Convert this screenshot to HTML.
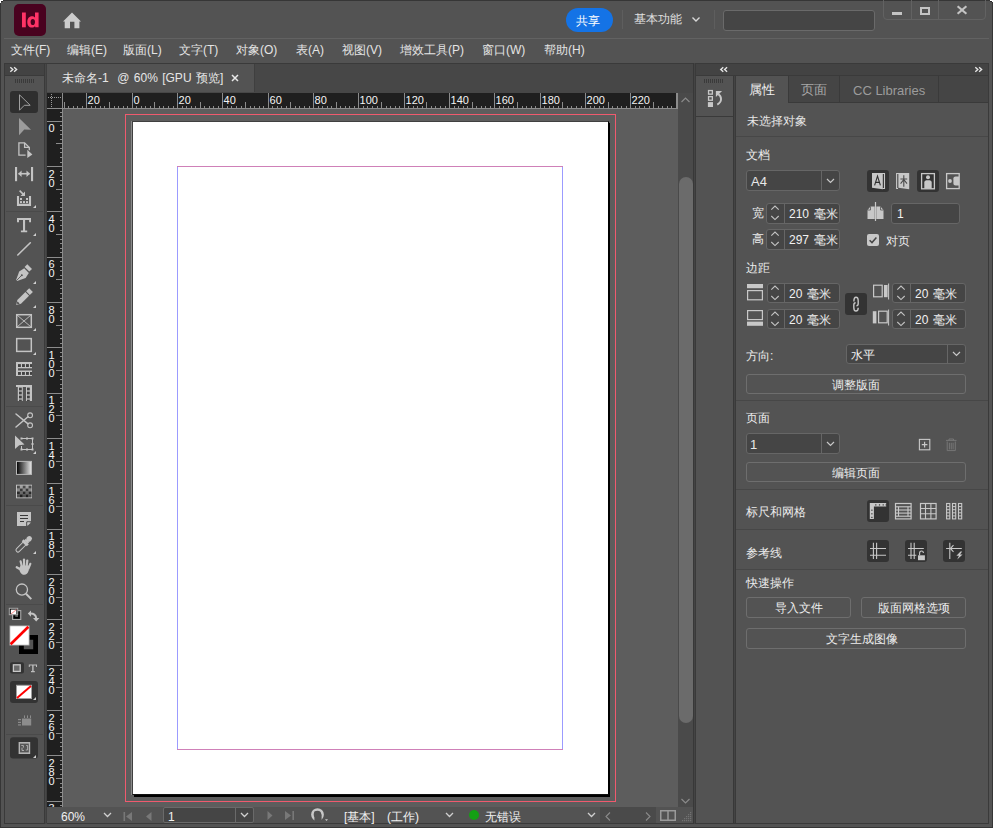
<!DOCTYPE html>
<html><head><meta charset="utf-8">
<style>
*{box-sizing:border-box;margin:0;padding:0}
html,body{width:994px;height:829px;overflow:hidden;background:#fff}
body{font-family:"Liberation Sans",sans-serif;font-size:12px;color:#d6d6d6;position:relative}
.a{position:absolute;display:block}
.t{position:absolute;white-space:nowrap;line-height:1}
</style></head><body>
<div class="a" style="left:0px;top:0px;width:993px;height:828px;background:#535353;border:1px solid #363636"></div>
<div class="a" style="left:0px;top:0px;width:3px;height:1px;background:#fff"></div>
<div class="a" style="left:0px;top:1px;width:1px;height:2px;background:#fff"></div>
<div class="a" style="left:1px;top:1px;width:2px;height:1px;background:#2a2a2a"></div>
<div class="a" style="left:990px;top:0px;width:3px;height:1px;background:#fff"></div>
<div class="a" style="left:992px;top:1px;width:1px;height:1px;background:#fff"></div>
<div class="a" style="left:990px;top:1px;width:2px;height:1px;background:#2a2a2a"></div>
<div class="a" style="left:14px;top:4px;width:32px;height:32px;background:#49021f;border-radius:5px"></div>
<svg class="a" style="left:14px;top:4px;" width="32" height="32" viewBox="0 0 32 32"><rect x="8" y="8.5" width="3.8" height="14.8" fill="#ff3366"/><path d="M21 8.5h3.6v14.8h-3.4l-0.1-1.2c-0.8,1-1.9,1.5-3.2,1.5c-2.9,0-4.6-2.4-4.6-5.6c0-3.3,1.8-5.7,4.7-5.7c1.2,0,2.3,0.5,3,1.3z M18.8,14.9c-1.4,0-2.2,1.2-2.2,3.1c0,1.9,0.8,3.1,2.2,3.1c1.4,0,2.2-1.2,2.2-3.1c0-1.9-0.8-3.1-2.2-3.1z" fill="#ff3366" fill-rule="evenodd"/></svg>
<svg class="a" style="left:62px;top:11px;" width="20" height="18" viewBox="0 0 20 18"><path d="M1 10.5 L10 1.5 L19 10.5 L17.4 10.5 L17.4 17.2 L12.4 17.2 L12.4 10.7 L8 10.7 L8 17.2 L2.7 17.2 L2.7 10.5 Z" fill="#cccccc"/></svg>
<div class="a" style="left:566px;top:8px;width:47px;height:24px;background:#1473e6;border-radius:12px"></div>
<div class="t" style="left:576px;top:15px;color:#fff;font-size:12px">共享</div>
<div class="a" style="left:622px;top:10px;width:1px;height:19px;background:#5e5e5e"></div>
<div class="t" style="left:634px;top:13px;color:#e0e0e0;font-size:12px">基本功能</div>
<svg class="a" style="left:691px;top:16px;" width="10" height="7" viewBox="0 0 10 7"><path d="M1.5 1.5 L5 5 L8.5 1.5" stroke="#d8d8d8" stroke-width="1.4" fill="none"/></svg>
<div class="a" style="left:714px;top:10px;width:1px;height:19px;background:#5e5e5e"></div>
<div class="a" style="left:723px;top:10px;width:152px;height:21px;background:#454545;border:1px solid #6a6a6a;border-radius:3px"></div>
<div class="a" style="left:883px;top:-3px;width:103px;height:23px;border:1px solid #626262;border-radius:0 0 4px 4px"></div>
<div class="a" style="left:911px;top:0px;width:1px;height:19px;background:#626262"></div>
<div class="a" style="left:938px;top:0px;width:1px;height:19px;background:#626262"></div>
<div class="a" style="left:892px;top:12px;width:10px;height:3px;background:#c4c4c4"></div>
<div class="a" style="left:920px;top:7px;width:10px;height:8px;border:2px solid #c4c4c4"></div>
<svg class="a" style="left:956px;top:5px;" width="12" height="10" viewBox="0 0 12 10"><path d="M1.6 1.2 L10.4 8.8 M10.4 1.2 L1.6 8.8" stroke="#c4c4c4" stroke-width="2.1"/></svg>
<div class="a" style="left:4px;top:38px;width:985px;height:1px;background:#626262"></div>
<div class="t" style="left:11px;top:44px;color:#e4e4e4">文件(F)</div>
<div class="t" style="left:67px;top:44px;color:#e4e4e4">编辑(E)</div>
<div class="t" style="left:123px;top:44px;color:#e4e4e4">版面(L)</div>
<div class="t" style="left:179px;top:44px;color:#e4e4e4">文字(T)</div>
<div class="t" style="left:236px;top:44px;color:#e4e4e4">对象(O)</div>
<div class="t" style="left:296px;top:44px;color:#e4e4e4">表(A)</div>
<div class="t" style="left:342px;top:44px;color:#e4e4e4">视图(V)</div>
<div class="t" style="left:400px;top:44px;color:#e4e4e4">增效工具(P)</div>
<div class="t" style="left:482px;top:44px;color:#e4e4e4">窗口(W)</div>
<div class="t" style="left:544px;top:44px;color:#e4e4e4">帮助(H)</div>
<div class="a" style="left:4px;top:63px;width:41px;height:761px;background:#535353;border:1px solid #3a3a3a"></div>
<div class="a" style="left:45px;top:63px;width:2px;height:761px;background:#3a3a3a"></div>
<div class="a" style="left:5px;top:64px;width:39px;height:11px;background:#434343"></div>
<div class="a" style="left:5px;top:75px;width:39px;height:1px;background:#3a3a3a"></div>
<svg class="a" style="left:0px;top:0px;" width="46" height="770" viewBox="0 0 46 770"><path d="M10.3 67.3 L12.8 69.5 L10.3 71.7 M14.1 67.3 L16.6 69.5 L14.1 71.7" stroke="#e6e6e6" stroke-width="1.4" fill="none"/><rect x="15" y="79" width="1" height="4" fill="#3a3a3a"/><rect x="17" y="79" width="1" height="4" fill="#3a3a3a"/><rect x="19" y="79" width="1" height="4" fill="#3a3a3a"/><rect x="21" y="79" width="1" height="4" fill="#3a3a3a"/><rect x="23" y="79" width="1" height="4" fill="#3a3a3a"/><rect x="25" y="79" width="1" height="4" fill="#3a3a3a"/><rect x="27" y="79" width="1" height="4" fill="#3a3a3a"/><rect x="29" y="79" width="1" height="4" fill="#3a3a3a"/><rect x="31" y="79" width="1" height="4" fill="#3a3a3a"/><rect x="33" y="79" width="1" height="4" fill="#3a3a3a"/><rect x="10" y="91" width="28" height="22" rx="3" fill="#2f2f2f"/><path d="M19.5 94.8 L30.2 105.3 L24.3 105.3 L19.5 110.2 Z" stroke="#a0a0a0" stroke-width="1" fill="none" stroke-linejoin="miter"/><path d="M19 118 L31 129.7 L24.3 129.6 L19 135.2 Z" fill="#9c9c9c"/><path d="M25.6 155.2 H18.9 V142.9 H24.6 L29.3 147.6 V150.2" stroke="#c4c4c4" stroke-width="1.3" fill="none"/><path d="M24.6 142.9 V147.4 H29.3" stroke="#c4c4c4" stroke-width="1.3" fill="none"/><path d="M27.3 149.8 L32.4 154.4 L27.3 158 Z" fill="#c4c4c4"/><rect x="15" y="167" width="2.1" height="14.2" fill="#c4c4c4"/><rect x="31" y="167" width="2.1" height="14.2" fill="#c4c4c4"/><path d="M18.5 173.7 H29.6" stroke="#c4c4c4" stroke-width="1.6"/><path d="M18.2 173.7 L21.6 170.4 V177 Z M29.9 173.7 L26.5 170.4 V177 Z" fill="#c4c4c4"/><path d="M18 196 V204.9 H30 V196" stroke="#c4c4c4" stroke-width="2.1" fill="none"/><rect x="20" y="198" width="2" height="2" fill="#c4c4c4"/><rect x="26" y="198" width="2" height="2" fill="#c4c4c4"/><rect x="20" y="201.1" width="2" height="2" fill="#c4c4c4"/><rect x="23" y="201.1" width="2" height="2" fill="#c4c4c4"/><rect x="26" y="201.1" width="2" height="2" fill="#c4c4c4"/><path d="M19.6 190.6 L23.6 194.6" stroke="#c4c4c4" stroke-width="1.6"/><path d="M25 196 L25 191.5 L20.5 196 Z" fill="#c4c4c4"/><path d="M36 205 V208 H33 Z" fill="#d0d0d0"/><rect x="6" y="211" width="37" height="1" fill="#4a4a4a"/><path d="M17 218 H31 V222.3 H29.1 V220 H25.1 V230.4 H27.2 V232.2 H20.9 V230.4 H23 V220 H19 V222.3 H17 Z" fill="#c4c4c4"/><path d="M36 233 V236 H33 Z" fill="#d0d0d0"/><path d="M17.8 255 L30.3 242.8" stroke="#c4c4c4" stroke-width="1.6" stroke-linecap="round"/><path d="M24.6 266.9 L27.3 264.2 L32 268.9 L29.3 271.6 Z" fill="#c4c4c4"/><path d="M16.1 280 L19.2 271.5 L24.2 268.3 L28.8 272.9 L25.6 277.9 L17.1 281 Z" fill="#c4c4c4"/><path d="M16.4 280.6 L21.3 275.7" stroke="#535353" stroke-width="0.9"/><circle cx="21.8" cy="275.3" r="1" fill="#535353"/><path d="M36 281 V284 H33 Z" fill="#d0d0d0"/><g transform="translate(16.2 304.9) rotate(-45)"><path d="M0 0 L4.2 -2.6 H15.6 V2.6 H4.2 Z" fill="#c4c4c4"/><path d="M1.6 -1 L3.4 -1.4 V1.4 L1.6 1 Z" fill="#535353"/><rect x="16.6" y="-2.6" width="4.4" height="5.2" fill="#c4c4c4"/></g><path d="M36 305 V308 H33 Z" fill="#d0d0d0"/><rect x="16.7" y="314.7" width="14.6" height="12.6" stroke="#c4c4c4" stroke-width="1.5" fill="none"/><path d="M17.2 315.2 L30.8 326.8 M30.8 315.2 L17.2 326.8" stroke="#c4c4c4" stroke-width="0.9"/><path d="M36 328 V331 H33 Z" fill="#d0d0d0"/><rect x="16.7" y="338.6" width="14.6" height="12.8" stroke="#c4c4c4" stroke-width="1.5" fill="none"/><path d="M36 352 V355 H33 Z" fill="#d0d0d0"/><rect x="16" y="362" width="16" height="14" fill="#c4c4c4"/><rect x="18" y="364.1" width="2.9" height="2.9" fill="#424242"/><rect x="22" y="364.1" width="2.9" height="2.9" fill="#424242"/><rect x="26" y="364.1" width="2.9" height="2.9" fill="#424242"/><rect x="30" y="364.1" width="2" height="2.9" fill="#424242"/><rect x="18" y="372" width="2.9" height="2.9" fill="#424242"/><rect x="22" y="372" width="2.9" height="2.9" fill="#424242"/><rect x="26" y="372" width="2.9" height="2.9" fill="#424242"/><rect x="30" y="372" width="2" height="2.9" fill="#424242"/><rect x="18" y="368.3" width="14" height="2.2" fill="#535353"/><rect x="16" y="385" width="16" height="2" fill="#c4c4c4"/><rect x="17.8" y="387" width="5" height="14" fill="#c4c4c4"/><rect x="26" y="387" width="6" height="14" fill="#c4c4c4"/><rect x="19" y="387.6" width="2.8" height="2.8" fill="#424242"/><rect x="27" y="387.6" width="2.8" height="2.8" fill="#424242"/><rect x="19" y="391.6" width="2.8" height="2.8" fill="#424242"/><rect x="27" y="391.6" width="2.8" height="2.8" fill="#424242"/><rect x="19" y="395.6" width="2.8" height="2.8" fill="#424242"/><rect x="27" y="395.6" width="2.8" height="2.8" fill="#424242"/><rect x="19" y="399.6" width="2.8" height="1.3999999999999773" fill="#424242"/><rect x="27" y="399.6" width="2.8" height="1.3999999999999773" fill="#424242"/><rect x="6" y="406" width="37" height="1" fill="#4a4a4a"/><circle cx="30.1" cy="415.3" r="2.4" stroke="#c4c4c4" stroke-width="1.1" fill="none"/><circle cx="30.1" cy="425.3" r="2.4" stroke="#c4c4c4" stroke-width="1.1" fill="none"/><path d="M16 414 L28 423.8 M16 427 L28 416.8" stroke="#c4c4c4" stroke-width="1.5" stroke-linecap="round"/><path d="M21.5 438.5 H32.5 V449.5 H21.5 V446" stroke="#c4c4c4" stroke-width="1" fill="none"/><rect x="20.5" y="437.5" width="2" height="2" fill="#c4c4c4"/><rect x="26" y="437.5" width="2" height="2" fill="#c4c4c4"/><rect x="31.5" y="437.5" width="2" height="2" fill="#c4c4c4"/><rect x="31.5" y="443" width="2" height="2" fill="#c4c4c4"/><rect x="31.5" y="448.5" width="2" height="2" fill="#c4c4c4"/><rect x="26" y="448.5" width="2" height="2" fill="#c4c4c4"/><rect x="20.5" y="448.5" width="2" height="2" fill="#c4c4c4"/><path d="M15 435.6 L24.5 444.5 L19.2 445.2 L15 448.9 Z" fill="#c4c4c4"/><path d="M36 451 V454 H33 Z" fill="#d0d0d0"/><defs><linearGradient id="g1" x1="0" x2="1" y1="0" y2="0"><stop offset="0" stop-color="#000"/><stop offset="1" stop-color="#e8e8e8"/></linearGradient></defs><rect x="16.5" y="461.4" width="15" height="13" fill="url(#g1)" stroke="#b8b8b8" stroke-width="1"/><rect x="16.5" y="485.2" width="15" height="12.6" fill="#9a9a9a" stroke="#c0c0c0" stroke-width="1"/><rect x="17.0" y="485.7" width="2.9" height="2.9" fill="#4a4a4a"/><rect x="19.9" y="485.7" width="2.9" height="2.9" fill="#a0a0a0"/><rect x="22.8" y="485.7" width="2.9" height="2.9" fill="#4a4a4a"/><rect x="25.7" y="485.7" width="2.9" height="2.9" fill="#a0a0a0"/><rect x="28.6" y="485.7" width="2.9" height="2.9" fill="#4a4a4a"/><rect x="17.0" y="488.6" width="2.9" height="2.9" fill="#8a8a8a"/><rect x="19.9" y="488.6" width="2.9" height="2.9" fill="#3a3a3a"/><rect x="22.8" y="488.6" width="2.9" height="2.9" fill="#8a8a8a"/><rect x="25.7" y="488.6" width="2.9" height="2.9" fill="#3a3a3a"/><rect x="28.6" y="488.6" width="2.9" height="2.9" fill="#8a8a8a"/><rect x="17.0" y="491.5" width="2.9" height="2.9" fill="#2a2a2a"/><rect x="19.9" y="491.5" width="2.9" height="2.9" fill="#6a6a6a"/><rect x="22.8" y="491.5" width="2.9" height="2.9" fill="#2a2a2a"/><rect x="25.7" y="491.5" width="2.9" height="2.9" fill="#6a6a6a"/><rect x="28.6" y="491.5" width="2.9" height="2.9" fill="#2a2a2a"/><rect x="17.0" y="494.4" width="2.9" height="2.9" fill="#505050"/><rect x="19.9" y="494.4" width="2.9" height="2.9" fill="#202020"/><rect x="22.8" y="494.4" width="2.9" height="2.9" fill="#505050"/><rect x="25.7" y="494.4" width="2.9" height="2.9" fill="#202020"/><rect x="28.6" y="494.4" width="2.9" height="2.9" fill="#505050"/><rect x="6" y="505" width="37" height="1" fill="#4a4a4a"/><path d="M17 512 H31 V521.3 L26.5 526 H17 Z" fill="#c4c4c4"/><path d="M26.8 526 V521.8 H31" stroke="#3a3a3a" stroke-width="1" fill="none"/><path d="M27.4 526 V522.4 H31 Z" fill="#c4c4c4"/><rect x="20" y="515" width="8" height="1" fill="#3a3a3a"/><rect x="20" y="518" width="8" height="1" fill="#3a3a3a"/><rect x="20" y="521" width="4" height="1" fill="#3a3a3a"/><g transform="translate(17.2 550.8) rotate(-45)"><path d="M1.1 -2 H10.2 V2 H1.1 A2 2 0 0 1 1.1 -2 Z" stroke="#c4c4c4" stroke-width="1" fill="none"/><rect x="10" y="-3.6" width="2.8" height="7.2" fill="#c4c4c4"/><rect x="12.6" y="-2.4" width="2" height="4.8" fill="#c4c4c4"/><rect x="14" y="-2.6" width="5.8" height="5.2" rx="2.6" fill="#c4c4c4"/></g><path d="M36 551 V554 H33 Z" fill="#d0d0d0"/><g stroke="#c4c4c4" stroke-width="2.2" stroke-linecap="round" fill="none"><path d="M16.7 567.2 L21 569.8"/><path d="M20.6 561.3 L22 567"/><path d="M24 559.6 L24.1 566"/><path d="M27.3 560.6 L26.7 566"/><path d="M30.3 563.8 L28.4 568.5"/></g><path d="M20.6 565.5 H28.6 L28.7 570.5 C27.8 573.4 26.2 574.8 24.3 574.8 C22.4 574.8 20.9 573.6 19.9 571.4 L19.2 568.6 Z" fill="#c4c4c4"/><circle cx="21.9" cy="589.6" r="5.6" stroke="#c4c4c4" stroke-width="1.3" fill="none"/><path d="M26 593.8 L31.3 599.1" stroke="#c4c4c4" stroke-width="2"/><rect x="6" y="604" width="37" height="1" fill="#4a4a4a"/><rect x="12.5" y="610.5" width="8.3" height="9" fill="none" stroke="#a8a8a8" stroke-width="1"/><path d="M13.5 611.5 H19.8 V618.8 H13.5 Z M15.3 613.3 V617 H18 V613.3 Z" fill="#000" fill-rule="evenodd"/><rect x="9.3" y="608.3" width="8.4" height="6.4" fill="#000" stroke="#a8a8a8" stroke-width="1"/><rect x="10.8" y="609.6" width="5.6" height="4.6" fill="#fff"/><path d="M10.8 614.2 L16.4 609.6" stroke="#ff8a8a" stroke-width="1"/><path d="M30 613.6 C33.5 613.4 36.2 614.8 36.2 618.4" stroke="#c4c4c4" stroke-width="2" fill="none"/><path d="M27.8 613.6 L31 610.4 V616.8 Z M36.2 621.4 L33 618 H39.4 Z" fill="#c4c4c4"/><path d="M19 635 H38 V654 H19 Z M23.8 639.8 V649.3 H33.2 V639.8 Z" fill="#000" fill-rule="evenodd"/><rect x="9.8" y="625.8" width="19.4" height="19.4" fill="#fff" stroke="#8a8a8a" stroke-width="0.8"/><path d="M10.6 644.3 L28.4 626.8" stroke="#ff0000" stroke-width="2.6"/><rect x="10" y="662.3" width="14" height="11.3" rx="2" fill="#333"/><rect x="13.4" y="664.8" width="6.8" height="6.6" fill="#6a6a6a" stroke="#c8c8c8" stroke-width="1.3"/><path d="M28.8 664.4 H37 V667 H36 V665.6 H33.6 V671 H34.8 V672.2 H31 V671 H32.2 V665.6 H29.8 V667 H28.8 Z" fill="#bdbdbd"/><rect x="10" y="681" width="28" height="22" rx="3" fill="#333"/><rect x="16.5" y="685.3" width="15" height="13.2" fill="#fff" stroke="#a0a0a0" stroke-width="1"/><path d="M17 698 L31 686" stroke="#ff0000" stroke-width="2"/><path d="M36 697 V700 H33 Z" fill="#d0d0d0"/><rect x="22" y="718.5" width="9.2" height="7" fill="#8c8c8c"/><rect x="24" y="715.4" width="1" height="2.6" fill="#8c8c8c"/><rect x="27" y="715.4" width="1" height="2.6" fill="#8c8c8c"/><rect x="30" y="715.4" width="1" height="2.6" fill="#8c8c8c"/><rect x="18" y="719" width="3" height="1.2" fill="#8c8c8c"/><rect x="18" y="721.8" width="3" height="1.2" fill="#8c8c8c"/><rect x="18" y="724.3" width="3" height="1.2" fill="#8c8c8c"/><rect x="6" y="734" width="37" height="1" fill="#4a4a4a"/><rect x="10" y="737.3" width="28" height="21.3" rx="3" fill="#333"/><rect x="18.6" y="742" width="11.6" height="12" fill="#b4b4b4"/><rect x="20" y="743.6" width="8.8" height="8.8" fill="#555"/><path d="M21.3 745.5 H23.4 V747.6 M26.2 745.5 H27.6 V750 H25.8 M22 747.6 V750.5 H24" stroke="#b4b4b4" stroke-width="0.9" fill="none"/><path d="M36 755 V758 H33 Z" fill="#d0d0d0"/></svg>
<div class="a" style="left:45px;top:63px;width:651px;height:761px;background:#474747;border-top:1px solid #3a3a3a"></div>
<div class="a" style="left:46px;top:64px;width:1px;height:759px;background:#3f3f3f"></div>
<div class="a" style="left:47px;top:64px;width:207px;height:28px;background:#535353"></div>
<div class="a" style="left:254px;top:64px;width:1px;height:28px;background:#3f3f3f"></div>
<div class="t" style="left:62px;top:72px;color:#e6e6e6;word-spacing:1px">未命名-1 &#160;@ 60% [GPU 预览]</div>
<svg class="a" style="left:231px;top:74px;" width="8" height="8" viewBox="0 0 8 8"><path d="M1 1 L7 7 M7 1 L1 7" stroke="#e8e8e8" stroke-width="1.5"/></svg>
<svg class="a" style="left:47px;top:93px;" width="631" height="16" viewBox="0 0 631 16"><rect x="0" y="0" width="630" height="15" fill="#1f1f1f"/><rect x="17" y="9" width="1" height="6" fill="#8c8c8c"/><rect x="21" y="13" width="1" height="2" fill="#8c8c8c"/><rect x="26" y="13" width="1" height="2" fill="#8c8c8c"/><rect x="30" y="13" width="1" height="2" fill="#8c8c8c"/><rect x="35" y="13" width="1" height="2" fill="#8c8c8c"/><rect x="39" y="0" width="1" height="15" fill="#8c8c8c"/><text x="40.6" y="11" font-size="11" fill="#f4f4f4" font-family="Liberation Sans">20</text><rect x="44" y="13" width="1" height="2" fill="#8c8c8c"/><rect x="48" y="13" width="1" height="2" fill="#8c8c8c"/><rect x="53" y="13" width="1" height="2" fill="#8c8c8c"/><rect x="57" y="13" width="1" height="2" fill="#8c8c8c"/><rect x="62" y="9" width="1" height="6" fill="#8c8c8c"/><rect x="67" y="13" width="1" height="2" fill="#8c8c8c"/><rect x="71" y="13" width="1" height="2" fill="#8c8c8c"/><rect x="76" y="13" width="1" height="2" fill="#8c8c8c"/><rect x="80" y="13" width="1" height="2" fill="#8c8c8c"/><rect x="85" y="0" width="1" height="15" fill="#8c8c8c"/><text x="86.6" y="11" font-size="11" fill="#f4f4f4" font-family="Liberation Sans">0</text><rect x="89" y="13" width="1" height="2" fill="#8c8c8c"/><rect x="94" y="13" width="1" height="2" fill="#8c8c8c"/><rect x="98" y="13" width="1" height="2" fill="#8c8c8c"/><rect x="103" y="13" width="1" height="2" fill="#8c8c8c"/><rect x="107" y="9" width="1" height="6" fill="#8c8c8c"/><rect x="112" y="13" width="1" height="2" fill="#8c8c8c"/><rect x="116" y="13" width="1" height="2" fill="#8c8c8c"/><rect x="121" y="13" width="1" height="2" fill="#8c8c8c"/><rect x="126" y="13" width="1" height="2" fill="#8c8c8c"/><rect x="130" y="0" width="1" height="15" fill="#8c8c8c"/><text x="131.6" y="11" font-size="11" fill="#f4f4f4" font-family="Liberation Sans">20</text><rect x="135" y="13" width="1" height="2" fill="#8c8c8c"/><rect x="139" y="13" width="1" height="2" fill="#8c8c8c"/><rect x="144" y="13" width="1" height="2" fill="#8c8c8c"/><rect x="148" y="13" width="1" height="2" fill="#8c8c8c"/><rect x="153" y="9" width="1" height="6" fill="#8c8c8c"/><rect x="157" y="13" width="1" height="2" fill="#8c8c8c"/><rect x="162" y="13" width="1" height="2" fill="#8c8c8c"/><rect x="166" y="13" width="1" height="2" fill="#8c8c8c"/><rect x="171" y="13" width="1" height="2" fill="#8c8c8c"/><rect x="175" y="0" width="1" height="15" fill="#8c8c8c"/><text x="176.6" y="11" font-size="11" fill="#f4f4f4" font-family="Liberation Sans">40</text><rect x="180" y="13" width="1" height="2" fill="#8c8c8c"/><rect x="184" y="13" width="1" height="2" fill="#8c8c8c"/><rect x="189" y="13" width="1" height="2" fill="#8c8c8c"/><rect x="194" y="13" width="1" height="2" fill="#8c8c8c"/><rect x="198" y="9" width="1" height="6" fill="#8c8c8c"/><rect x="203" y="13" width="1" height="2" fill="#8c8c8c"/><rect x="207" y="13" width="1" height="2" fill="#8c8c8c"/><rect x="212" y="13" width="1" height="2" fill="#8c8c8c"/><rect x="216" y="13" width="1" height="2" fill="#8c8c8c"/><rect x="221" y="0" width="1" height="15" fill="#8c8c8c"/><text x="222.6" y="11" font-size="11" fill="#f4f4f4" font-family="Liberation Sans">60</text><rect x="225" y="13" width="1" height="2" fill="#8c8c8c"/><rect x="230" y="13" width="1" height="2" fill="#8c8c8c"/><rect x="234" y="13" width="1" height="2" fill="#8c8c8c"/><rect x="239" y="13" width="1" height="2" fill="#8c8c8c"/><rect x="243" y="9" width="1" height="6" fill="#8c8c8c"/><rect x="248" y="13" width="1" height="2" fill="#8c8c8c"/><rect x="252" y="13" width="1" height="2" fill="#8c8c8c"/><rect x="257" y="13" width="1" height="2" fill="#8c8c8c"/><rect x="262" y="13" width="1" height="2" fill="#8c8c8c"/><rect x="266" y="0" width="1" height="15" fill="#8c8c8c"/><text x="267.6" y="11" font-size="11" fill="#f4f4f4" font-family="Liberation Sans">80</text><rect x="271" y="13" width="1" height="2" fill="#8c8c8c"/><rect x="275" y="13" width="1" height="2" fill="#8c8c8c"/><rect x="280" y="13" width="1" height="2" fill="#8c8c8c"/><rect x="284" y="13" width="1" height="2" fill="#8c8c8c"/><rect x="289" y="9" width="1" height="6" fill="#8c8c8c"/><rect x="293" y="13" width="1" height="2" fill="#8c8c8c"/><rect x="298" y="13" width="1" height="2" fill="#8c8c8c"/><rect x="302" y="13" width="1" height="2" fill="#8c8c8c"/><rect x="307" y="13" width="1" height="2" fill="#8c8c8c"/><rect x="311" y="0" width="1" height="15" fill="#8c8c8c"/><text x="312.6" y="11" font-size="11" fill="#f4f4f4" font-family="Liberation Sans">100</text><rect x="316" y="13" width="1" height="2" fill="#8c8c8c"/><rect x="320" y="13" width="1" height="2" fill="#8c8c8c"/><rect x="325" y="13" width="1" height="2" fill="#8c8c8c"/><rect x="330" y="13" width="1" height="2" fill="#8c8c8c"/><rect x="334" y="9" width="1" height="6" fill="#8c8c8c"/><rect x="339" y="13" width="1" height="2" fill="#8c8c8c"/><rect x="343" y="13" width="1" height="2" fill="#8c8c8c"/><rect x="348" y="13" width="1" height="2" fill="#8c8c8c"/><rect x="352" y="13" width="1" height="2" fill="#8c8c8c"/><rect x="357" y="0" width="1" height="15" fill="#8c8c8c"/><text x="358.6" y="11" font-size="11" fill="#f4f4f4" font-family="Liberation Sans">120</text><rect x="361" y="13" width="1" height="2" fill="#8c8c8c"/><rect x="366" y="13" width="1" height="2" fill="#8c8c8c"/><rect x="370" y="13" width="1" height="2" fill="#8c8c8c"/><rect x="375" y="13" width="1" height="2" fill="#8c8c8c"/><rect x="379" y="9" width="1" height="6" fill="#8c8c8c"/><rect x="384" y="13" width="1" height="2" fill="#8c8c8c"/><rect x="388" y="13" width="1" height="2" fill="#8c8c8c"/><rect x="393" y="13" width="1" height="2" fill="#8c8c8c"/><rect x="398" y="13" width="1" height="2" fill="#8c8c8c"/><rect x="402" y="0" width="1" height="15" fill="#8c8c8c"/><text x="403.6" y="11" font-size="11" fill="#f4f4f4" font-family="Liberation Sans">140</text><rect x="407" y="13" width="1" height="2" fill="#8c8c8c"/><rect x="411" y="13" width="1" height="2" fill="#8c8c8c"/><rect x="416" y="13" width="1" height="2" fill="#8c8c8c"/><rect x="420" y="13" width="1" height="2" fill="#8c8c8c"/><rect x="425" y="9" width="1" height="6" fill="#8c8c8c"/><rect x="429" y="13" width="1" height="2" fill="#8c8c8c"/><rect x="434" y="13" width="1" height="2" fill="#8c8c8c"/><rect x="438" y="13" width="1" height="2" fill="#8c8c8c"/><rect x="443" y="13" width="1" height="2" fill="#8c8c8c"/><rect x="447" y="0" width="1" height="15" fill="#8c8c8c"/><text x="448.6" y="11" font-size="11" fill="#f4f4f4" font-family="Liberation Sans">160</text><rect x="452" y="13" width="1" height="2" fill="#8c8c8c"/><rect x="456" y="13" width="1" height="2" fill="#8c8c8c"/><rect x="461" y="13" width="1" height="2" fill="#8c8c8c"/><rect x="466" y="13" width="1" height="2" fill="#8c8c8c"/><rect x="470" y="9" width="1" height="6" fill="#8c8c8c"/><rect x="475" y="13" width="1" height="2" fill="#8c8c8c"/><rect x="479" y="13" width="1" height="2" fill="#8c8c8c"/><rect x="484" y="13" width="1" height="2" fill="#8c8c8c"/><rect x="488" y="13" width="1" height="2" fill="#8c8c8c"/><rect x="493" y="0" width="1" height="15" fill="#8c8c8c"/><text x="494.6" y="11" font-size="11" fill="#f4f4f4" font-family="Liberation Sans">180</text><rect x="497" y="13" width="1" height="2" fill="#8c8c8c"/><rect x="502" y="13" width="1" height="2" fill="#8c8c8c"/><rect x="506" y="13" width="1" height="2" fill="#8c8c8c"/><rect x="511" y="13" width="1" height="2" fill="#8c8c8c"/><rect x="515" y="9" width="1" height="6" fill="#8c8c8c"/><rect x="520" y="13" width="1" height="2" fill="#8c8c8c"/><rect x="524" y="13" width="1" height="2" fill="#8c8c8c"/><rect x="529" y="13" width="1" height="2" fill="#8c8c8c"/><rect x="534" y="13" width="1" height="2" fill="#8c8c8c"/><rect x="538" y="0" width="1" height="15" fill="#8c8c8c"/><text x="539.6" y="11" font-size="11" fill="#f4f4f4" font-family="Liberation Sans">200</text><rect x="543" y="13" width="1" height="2" fill="#8c8c8c"/><rect x="547" y="13" width="1" height="2" fill="#8c8c8c"/><rect x="552" y="13" width="1" height="2" fill="#8c8c8c"/><rect x="556" y="13" width="1" height="2" fill="#8c8c8c"/><rect x="561" y="9" width="1" height="6" fill="#8c8c8c"/><rect x="565" y="13" width="1" height="2" fill="#8c8c8c"/><rect x="570" y="13" width="1" height="2" fill="#8c8c8c"/><rect x="574" y="13" width="1" height="2" fill="#8c8c8c"/><rect x="579" y="13" width="1" height="2" fill="#8c8c8c"/><rect x="583" y="0" width="1" height="15" fill="#8c8c8c"/><text x="584.6" y="11" font-size="11" fill="#f4f4f4" font-family="Liberation Sans">220</text><rect x="588" y="13" width="1" height="2" fill="#8c8c8c"/><rect x="592" y="13" width="1" height="2" fill="#8c8c8c"/><rect x="597" y="13" width="1" height="2" fill="#8c8c8c"/><rect x="602" y="13" width="1" height="2" fill="#8c8c8c"/><rect x="606" y="9" width="1" height="6" fill="#8c8c8c"/><rect x="611" y="13" width="1" height="2" fill="#8c8c8c"/><rect x="615" y="13" width="1" height="2" fill="#8c8c8c"/><rect x="620" y="13" width="1" height="2" fill="#8c8c8c"/><rect x="624" y="13" width="1" height="2" fill="#8c8c8c"/><rect x="629" y="0" width="1" height="15" fill="#8c8c8c"/><text x="630.6" y="11" font-size="11" fill="#f4f4f4" font-family="Liberation Sans">240</text><rect x="0" y="15" width="631" height="1" fill="#8c8c8c"/><rect x="630" y="0" width="1" height="16" fill="#8c8c8c"/><rect x="1" y="4" width="1" height="1" fill="#9a9a9a"/><rect x="4" y="1" width="1" height="1" fill="#9a9a9a"/><rect x="3" y="4" width="1" height="1" fill="#9a9a9a"/><rect x="4" y="3" width="1" height="1" fill="#9a9a9a"/><rect x="5" y="4" width="1" height="1" fill="#9a9a9a"/><rect x="4" y="5" width="1" height="1" fill="#9a9a9a"/><rect x="7" y="4" width="1" height="1" fill="#9a9a9a"/><rect x="4" y="7" width="1" height="1" fill="#9a9a9a"/><rect x="9" y="4" width="1" height="1" fill="#9a9a9a"/><rect x="4" y="9" width="1" height="1" fill="#9a9a9a"/><rect x="11" y="4" width="1" height="1" fill="#9a9a9a"/><rect x="4" y="11" width="1" height="1" fill="#9a9a9a"/><rect x="13" y="4" width="1" height="1" fill="#9a9a9a"/><rect x="4" y="13" width="1" height="1" fill="#9a9a9a"/><rect x="15" y="0" width="1" height="16" fill="#8c8c8c"/></svg>
<svg class="a" style="left:47px;top:109px;" width="16" height="698" viewBox="0 0 16 698"><rect x="0" y="0" width="15" height="698" fill="#1f1f1f"/><rect x="13" y="3" width="2" height="1" fill="#8c8c8c"/><rect x="13" y="7" width="2" height="1" fill="#8c8c8c"/><rect x="0" y="12" width="15" height="1" fill="#8c8c8c"/><text x="1.6" y="23" font-size="11" fill="#f4f4f4" font-family="Liberation Sans">0</text><rect x="13" y="16" width="2" height="1" fill="#8c8c8c"/><rect x="13" y="21" width="2" height="1" fill="#8c8c8c"/><rect x="13" y="25" width="2" height="1" fill="#8c8c8c"/><rect x="13" y="30" width="2" height="1" fill="#8c8c8c"/><rect x="9" y="34" width="6" height="1" fill="#8c8c8c"/><rect x="13" y="39" width="2" height="1" fill="#8c8c8c"/><rect x="13" y="43" width="2" height="1" fill="#8c8c8c"/><rect x="13" y="48" width="2" height="1" fill="#8c8c8c"/><rect x="13" y="53" width="2" height="1" fill="#8c8c8c"/><rect x="0" y="57" width="15" height="1" fill="#8c8c8c"/><text x="1.6" y="69" font-size="11" fill="#f4f4f4" font-family="Liberation Sans">2</text><text x="1.6" y="78" font-size="11" fill="#f4f4f4" font-family="Liberation Sans">0</text><rect x="13" y="62" width="2" height="1" fill="#8c8c8c"/><rect x="13" y="66" width="2" height="1" fill="#8c8c8c"/><rect x="13" y="71" width="2" height="1" fill="#8c8c8c"/><rect x="13" y="75" width="2" height="1" fill="#8c8c8c"/><rect x="9" y="80" width="6" height="1" fill="#8c8c8c"/><rect x="13" y="84" width="2" height="1" fill="#8c8c8c"/><rect x="13" y="89" width="2" height="1" fill="#8c8c8c"/><rect x="13" y="93" width="2" height="1" fill="#8c8c8c"/><rect x="13" y="98" width="2" height="1" fill="#8c8c8c"/><rect x="0" y="102" width="15" height="1" fill="#8c8c8c"/><text x="1.6" y="114" font-size="11" fill="#f4f4f4" font-family="Liberation Sans">4</text><text x="1.6" y="123" font-size="11" fill="#f4f4f4" font-family="Liberation Sans">0</text><rect x="13" y="107" width="2" height="1" fill="#8c8c8c"/><rect x="13" y="111" width="2" height="1" fill="#8c8c8c"/><rect x="13" y="116" width="2" height="1" fill="#8c8c8c"/><rect x="13" y="121" width="2" height="1" fill="#8c8c8c"/><rect x="9" y="125" width="6" height="1" fill="#8c8c8c"/><rect x="13" y="130" width="2" height="1" fill="#8c8c8c"/><rect x="13" y="134" width="2" height="1" fill="#8c8c8c"/><rect x="13" y="139" width="2" height="1" fill="#8c8c8c"/><rect x="13" y="143" width="2" height="1" fill="#8c8c8c"/><rect x="0" y="148" width="15" height="1" fill="#8c8c8c"/><text x="1.6" y="159" font-size="11" fill="#f4f4f4" font-family="Liberation Sans">6</text><text x="1.6" y="168" font-size="11" fill="#f4f4f4" font-family="Liberation Sans">0</text><rect x="13" y="152" width="2" height="1" fill="#8c8c8c"/><rect x="13" y="157" width="2" height="1" fill="#8c8c8c"/><rect x="13" y="161" width="2" height="1" fill="#8c8c8c"/><rect x="13" y="166" width="2" height="1" fill="#8c8c8c"/><rect x="9" y="170" width="6" height="1" fill="#8c8c8c"/><rect x="13" y="175" width="2" height="1" fill="#8c8c8c"/><rect x="13" y="179" width="2" height="1" fill="#8c8c8c"/><rect x="13" y="184" width="2" height="1" fill="#8c8c8c"/><rect x="13" y="189" width="2" height="1" fill="#8c8c8c"/><rect x="0" y="193" width="15" height="1" fill="#8c8c8c"/><text x="1.6" y="205" font-size="11" fill="#f4f4f4" font-family="Liberation Sans">8</text><text x="1.6" y="214" font-size="11" fill="#f4f4f4" font-family="Liberation Sans">0</text><rect x="13" y="198" width="2" height="1" fill="#8c8c8c"/><rect x="13" y="202" width="2" height="1" fill="#8c8c8c"/><rect x="13" y="207" width="2" height="1" fill="#8c8c8c"/><rect x="13" y="211" width="2" height="1" fill="#8c8c8c"/><rect x="9" y="216" width="6" height="1" fill="#8c8c8c"/><rect x="13" y="220" width="2" height="1" fill="#8c8c8c"/><rect x="13" y="225" width="2" height="1" fill="#8c8c8c"/><rect x="13" y="229" width="2" height="1" fill="#8c8c8c"/><rect x="13" y="234" width="2" height="1" fill="#8c8c8c"/><rect x="0" y="238" width="15" height="1" fill="#8c8c8c"/><text x="1.6" y="250" font-size="11" fill="#f4f4f4" font-family="Liberation Sans">1</text><text x="1.6" y="259" font-size="11" fill="#f4f4f4" font-family="Liberation Sans">0</text><text x="1.6" y="268" font-size="11" fill="#f4f4f4" font-family="Liberation Sans">0</text><rect x="13" y="243" width="2" height="1" fill="#8c8c8c"/><rect x="13" y="247" width="2" height="1" fill="#8c8c8c"/><rect x="13" y="252" width="2" height="1" fill="#8c8c8c"/><rect x="13" y="257" width="2" height="1" fill="#8c8c8c"/><rect x="9" y="261" width="6" height="1" fill="#8c8c8c"/><rect x="13" y="266" width="2" height="1" fill="#8c8c8c"/><rect x="13" y="270" width="2" height="1" fill="#8c8c8c"/><rect x="13" y="275" width="2" height="1" fill="#8c8c8c"/><rect x="13" y="279" width="2" height="1" fill="#8c8c8c"/><rect x="0" y="284" width="15" height="1" fill="#8c8c8c"/><text x="1.6" y="295" font-size="11" fill="#f4f4f4" font-family="Liberation Sans">1</text><text x="1.6" y="304" font-size="11" fill="#f4f4f4" font-family="Liberation Sans">2</text><text x="1.6" y="313" font-size="11" fill="#f4f4f4" font-family="Liberation Sans">0</text><rect x="13" y="288" width="2" height="1" fill="#8c8c8c"/><rect x="13" y="293" width="2" height="1" fill="#8c8c8c"/><rect x="13" y="297" width="2" height="1" fill="#8c8c8c"/><rect x="13" y="302" width="2" height="1" fill="#8c8c8c"/><rect x="9" y="306" width="6" height="1" fill="#8c8c8c"/><rect x="13" y="311" width="2" height="1" fill="#8c8c8c"/><rect x="13" y="315" width="2" height="1" fill="#8c8c8c"/><rect x="13" y="320" width="2" height="1" fill="#8c8c8c"/><rect x="13" y="325" width="2" height="1" fill="#8c8c8c"/><rect x="0" y="329" width="15" height="1" fill="#8c8c8c"/><text x="1.6" y="341" font-size="11" fill="#f4f4f4" font-family="Liberation Sans">1</text><text x="1.6" y="350" font-size="11" fill="#f4f4f4" font-family="Liberation Sans">4</text><text x="1.6" y="359" font-size="11" fill="#f4f4f4" font-family="Liberation Sans">0</text><rect x="13" y="334" width="2" height="1" fill="#8c8c8c"/><rect x="13" y="338" width="2" height="1" fill="#8c8c8c"/><rect x="13" y="343" width="2" height="1" fill="#8c8c8c"/><rect x="13" y="347" width="2" height="1" fill="#8c8c8c"/><rect x="9" y="352" width="6" height="1" fill="#8c8c8c"/><rect x="13" y="356" width="2" height="1" fill="#8c8c8c"/><rect x="13" y="361" width="2" height="1" fill="#8c8c8c"/><rect x="13" y="365" width="2" height="1" fill="#8c8c8c"/><rect x="13" y="370" width="2" height="1" fill="#8c8c8c"/><rect x="0" y="374" width="15" height="1" fill="#8c8c8c"/><text x="1.6" y="386" font-size="11" fill="#f4f4f4" font-family="Liberation Sans">1</text><text x="1.6" y="395" font-size="11" fill="#f4f4f4" font-family="Liberation Sans">6</text><text x="1.6" y="404" font-size="11" fill="#f4f4f4" font-family="Liberation Sans">0</text><rect x="13" y="379" width="2" height="1" fill="#8c8c8c"/><rect x="13" y="383" width="2" height="1" fill="#8c8c8c"/><rect x="13" y="388" width="2" height="1" fill="#8c8c8c"/><rect x="13" y="393" width="2" height="1" fill="#8c8c8c"/><rect x="9" y="397" width="6" height="1" fill="#8c8c8c"/><rect x="13" y="402" width="2" height="1" fill="#8c8c8c"/><rect x="13" y="406" width="2" height="1" fill="#8c8c8c"/><rect x="13" y="411" width="2" height="1" fill="#8c8c8c"/><rect x="13" y="415" width="2" height="1" fill="#8c8c8c"/><rect x="0" y="420" width="15" height="1" fill="#8c8c8c"/><text x="1.6" y="431" font-size="11" fill="#f4f4f4" font-family="Liberation Sans">1</text><text x="1.6" y="440" font-size="11" fill="#f4f4f4" font-family="Liberation Sans">8</text><text x="1.6" y="449" font-size="11" fill="#f4f4f4" font-family="Liberation Sans">0</text><rect x="13" y="424" width="2" height="1" fill="#8c8c8c"/><rect x="13" y="429" width="2" height="1" fill="#8c8c8c"/><rect x="13" y="433" width="2" height="1" fill="#8c8c8c"/><rect x="13" y="438" width="2" height="1" fill="#8c8c8c"/><rect x="9" y="442" width="6" height="1" fill="#8c8c8c"/><rect x="13" y="447" width="2" height="1" fill="#8c8c8c"/><rect x="13" y="451" width="2" height="1" fill="#8c8c8c"/><rect x="13" y="456" width="2" height="1" fill="#8c8c8c"/><rect x="13" y="461" width="2" height="1" fill="#8c8c8c"/><rect x="0" y="465" width="15" height="1" fill="#8c8c8c"/><text x="1.6" y="477" font-size="11" fill="#f4f4f4" font-family="Liberation Sans">2</text><text x="1.6" y="486" font-size="11" fill="#f4f4f4" font-family="Liberation Sans">0</text><text x="1.6" y="495" font-size="11" fill="#f4f4f4" font-family="Liberation Sans">0</text><rect x="13" y="470" width="2" height="1" fill="#8c8c8c"/><rect x="13" y="474" width="2" height="1" fill="#8c8c8c"/><rect x="13" y="479" width="2" height="1" fill="#8c8c8c"/><rect x="13" y="483" width="2" height="1" fill="#8c8c8c"/><rect x="9" y="488" width="6" height="1" fill="#8c8c8c"/><rect x="13" y="492" width="2" height="1" fill="#8c8c8c"/><rect x="13" y="497" width="2" height="1" fill="#8c8c8c"/><rect x="13" y="501" width="2" height="1" fill="#8c8c8c"/><rect x="13" y="506" width="2" height="1" fill="#8c8c8c"/><rect x="0" y="510" width="15" height="1" fill="#8c8c8c"/><text x="1.6" y="522" font-size="11" fill="#f4f4f4" font-family="Liberation Sans">2</text><text x="1.6" y="531" font-size="11" fill="#f4f4f4" font-family="Liberation Sans">2</text><text x="1.6" y="540" font-size="11" fill="#f4f4f4" font-family="Liberation Sans">0</text><rect x="13" y="515" width="2" height="1" fill="#8c8c8c"/><rect x="13" y="519" width="2" height="1" fill="#8c8c8c"/><rect x="13" y="524" width="2" height="1" fill="#8c8c8c"/><rect x="13" y="529" width="2" height="1" fill="#8c8c8c"/><rect x="9" y="533" width="6" height="1" fill="#8c8c8c"/><rect x="13" y="538" width="2" height="1" fill="#8c8c8c"/><rect x="13" y="542" width="2" height="1" fill="#8c8c8c"/><rect x="13" y="547" width="2" height="1" fill="#8c8c8c"/><rect x="13" y="551" width="2" height="1" fill="#8c8c8c"/><rect x="0" y="556" width="15" height="1" fill="#8c8c8c"/><text x="1.6" y="567" font-size="11" fill="#f4f4f4" font-family="Liberation Sans">2</text><text x="1.6" y="576" font-size="11" fill="#f4f4f4" font-family="Liberation Sans">4</text><text x="1.6" y="585" font-size="11" fill="#f4f4f4" font-family="Liberation Sans">0</text><rect x="13" y="560" width="2" height="1" fill="#8c8c8c"/><rect x="13" y="565" width="2" height="1" fill="#8c8c8c"/><rect x="13" y="569" width="2" height="1" fill="#8c8c8c"/><rect x="13" y="574" width="2" height="1" fill="#8c8c8c"/><rect x="9" y="578" width="6" height="1" fill="#8c8c8c"/><rect x="13" y="583" width="2" height="1" fill="#8c8c8c"/><rect x="13" y="587" width="2" height="1" fill="#8c8c8c"/><rect x="13" y="592" width="2" height="1" fill="#8c8c8c"/><rect x="13" y="597" width="2" height="1" fill="#8c8c8c"/><rect x="0" y="601" width="15" height="1" fill="#8c8c8c"/><text x="1.6" y="613" font-size="11" fill="#f4f4f4" font-family="Liberation Sans">2</text><text x="1.6" y="622" font-size="11" fill="#f4f4f4" font-family="Liberation Sans">6</text><text x="1.6" y="631" font-size="11" fill="#f4f4f4" font-family="Liberation Sans">0</text><rect x="13" y="606" width="2" height="1" fill="#8c8c8c"/><rect x="13" y="610" width="2" height="1" fill="#8c8c8c"/><rect x="13" y="615" width="2" height="1" fill="#8c8c8c"/><rect x="13" y="619" width="2" height="1" fill="#8c8c8c"/><rect x="9" y="624" width="6" height="1" fill="#8c8c8c"/><rect x="13" y="628" width="2" height="1" fill="#8c8c8c"/><rect x="13" y="633" width="2" height="1" fill="#8c8c8c"/><rect x="13" y="637" width="2" height="1" fill="#8c8c8c"/><rect x="13" y="642" width="2" height="1" fill="#8c8c8c"/><rect x="0" y="646" width="15" height="1" fill="#8c8c8c"/><text x="1.6" y="658" font-size="11" fill="#f4f4f4" font-family="Liberation Sans">2</text><text x="1.6" y="667" font-size="11" fill="#f4f4f4" font-family="Liberation Sans">8</text><text x="1.6" y="676" font-size="11" fill="#f4f4f4" font-family="Liberation Sans">0</text><rect x="13" y="651" width="2" height="1" fill="#8c8c8c"/><rect x="13" y="655" width="2" height="1" fill="#8c8c8c"/><rect x="13" y="660" width="2" height="1" fill="#8c8c8c"/><rect x="13" y="665" width="2" height="1" fill="#8c8c8c"/><rect x="9" y="669" width="6" height="1" fill="#8c8c8c"/><rect x="13" y="674" width="2" height="1" fill="#8c8c8c"/><rect x="13" y="678" width="2" height="1" fill="#8c8c8c"/><rect x="13" y="683" width="2" height="1" fill="#8c8c8c"/><rect x="13" y="687" width="2" height="1" fill="#8c8c8c"/><rect x="0" y="692" width="15" height="1" fill="#8c8c8c"/><text x="1.6" y="703" font-size="11" fill="#f4f4f4" font-family="Liberation Sans">3</text><text x="1.6" y="712" font-size="11" fill="#f4f4f4" font-family="Liberation Sans">0</text><text x="1.6" y="721" font-size="11" fill="#f4f4f4" font-family="Liberation Sans">0</text><rect x="13" y="696" width="2" height="1" fill="#8c8c8c"/><rect x="15" y="0" width="1" height="698" fill="#8c8c8c"/></svg>
<div class="a" style="left:63px;top:109px;width:615px;height:698px;background:#5d5d5d"></div>
<div class="a" style="left:125px;top:114px;width:491px;height:688px;border:1px solid #f05a6e"></div>
<div class="a" style="left:131px;top:121px;width:1px;height:674px;background:#8a8a8a"></div>
<div class="a" style="left:609px;top:123px;width:1px;height:674px;background:#000"></div>
<div class="a" style="left:134px;top:795px;width:476px;height:2px;background:#000"></div>
<div class="a" style="left:132px;top:121px;width:477px;height:674px;background:#fff;border:1px solid #404040;border-right-color:#000;border-bottom-color:#111"></div>
<div class="a" style="left:177px;top:166px;width:1px;height:584px;background:#9b9bff"></div>
<div class="a" style="left:562px;top:166px;width:1px;height:584px;background:#9b9bff"></div>
<div class="a" style="left:177px;top:166px;width:386px;height:1px;background:#cf80b8"></div>
<div class="a" style="left:177px;top:749px;width:386px;height:1px;background:#cf80b8"></div>
<div class="a" style="left:678px;top:93px;width:15px;height:714px;background:#4a4a4a"></div>
<svg class="a" style="left:678px;top:95px;" width="15" height="10" viewBox="0 0 15 10"><path d="M3.5 7 L7.5 3 L11.5 7" stroke="#8a8a8a" stroke-width="1.2" fill="none"/></svg>
<div class="a" style="left:679px;top:177px;width:14px;height:546px;background:#6b6b6b;border-radius:7px"></div>
<svg class="a" style="left:678px;top:796px;" width="15" height="10" viewBox="0 0 15 10"><path d="M3.5 3 L7.5 7 L11.5 3" stroke="#8a8a8a" stroke-width="1.2" fill="none"/></svg>
<div class="a" style="left:693px;top:63px;width:3px;height:761px;background:#3f3f3f"></div>
<div class="a" style="left:47px;top:807px;width:646px;height:16px;background:#535353"></div>
<div class="a" style="left:47px;top:823px;width:646px;height:1px;background:#3a3a3a"></div>
<div class="t" style="left:61px;top:811px;color:#f0f0f0">60%</div>
<svg class="a" style="left:103px;top:812px;" width="9" height="6" viewBox="0 0 9 6"><path d="M1 1 L4.5 4.5 L8 1" stroke="#d0d0d0" stroke-width="1.3" fill="none"/></svg>
<svg class="a" style="left:123px;top:812px;" width="10" height="9" viewBox="0 0 10 9"><rect x="0.5" y="0" width="1.6" height="9" fill="#787878"/><path d="M9 0 L3 4.5 L9 9 Z" fill="#787878"/></svg>
<svg class="a" style="left:146px;top:812px;" width="6" height="9" viewBox="0 0 6 9"><path d="M5.5 0 L0 4.5 L5.5 9 Z" fill="#787878"/></svg>
<div class="a" style="left:163px;top:807px;width:91px;height:16px;background:#454545;border:1px solid #6a6a6a;border-radius:2px"></div>
<div class="a" style="left:235px;top:807px;width:1px;height:16px;background:#6a6a6a"></div>
<div class="t" style="left:168px;top:811px;color:#f2f2f2">1</div>
<svg class="a" style="left:240px;top:812px;" width="9" height="6" viewBox="0 0 9 6"><path d="M1 1 L4.5 4.5 L8 1" stroke="#d0d0d0" stroke-width="1.3" fill="none"/></svg>
<svg class="a" style="left:267px;top:811px;" width="6" height="9" viewBox="0 0 6 9"><path d="M0.5 0 L5.5 4.5 L0.5 9 Z" fill="#787878"/></svg>
<svg class="a" style="left:285px;top:811px;" width="10" height="9" viewBox="0 0 10 9"><path d="M0 0 L6 4.5 L0 9 Z" fill="#787878"/><rect x="7.4" y="0" width="1.6" height="9" fill="#787878"/></svg>
<svg class="a" style="left:305px;top:805px;" width="30" height="20" viewBox="0 0 30 20"><circle cx="12.5" cy="9.6" r="5.1" stroke="#c8c8c8" stroke-width="2.6" fill="none"/><path d="M9.4 18 V6.4 H13.4 V9.4 H16.6 V18 Z" fill="#535353"/><circle cx="14.6" cy="8" r="0.7" fill="#535353"/><path d="M20 14.2 H23 L21.5 16 Z" fill="#c8c8c8"/></svg>
<div class="t" style="left:344px;top:811px;color:#f0f0f0">[基本]</div>
<div class="t" style="left:387px;top:811px;color:#f0f0f0">(工作)</div>
<svg class="a" style="left:445px;top:812px;" width="9" height="6" viewBox="0 0 9 6"><path d="M1 1 L4.5 4.5 L8 1" stroke="#d0d0d0" stroke-width="1.3" fill="none"/></svg>
<div class="a" style="left:469px;top:810px;width:10px;height:10px;background:#14a014;border-radius:50%"></div>
<div class="t" style="left:485px;top:811px;color:#f0f0f0">无错误</div>
<svg class="a" style="left:587px;top:812px;" width="9" height="6" viewBox="0 0 9 6"><path d="M1 1 L4.5 4.5 L8 1" stroke="#d0d0d0" stroke-width="1.3" fill="none"/></svg>
<div class="a" style="left:600px;top:807px;width:56px;height:16px;background:#4a4a4a"></div>
<svg class="a" style="left:605px;top:812px;" width="6" height="9" viewBox="0 0 6 9"><path d="M5 0.5 L1 4.5 L5 8.5" stroke="#8a8a8a" stroke-width="1.1" fill="none"/></svg>
<svg class="a" style="left:645px;top:812px;" width="6" height="9" viewBox="0 0 6 9"><path d="M1 0.5 L5 4.5 L1 8.5" stroke="#8a8a8a" stroke-width="1.1" fill="none"/></svg>
<svg class="a" style="left:660px;top:810px;" width="16" height="11" viewBox="0 0 16 11"><rect x="0.75" y="0.75" width="14.5" height="9.5" stroke="#9a9a9a" stroke-width="1.5" fill="none"/><line x1="8" y1="0" x2="8" y2="11" stroke="#9a9a9a" stroke-width="1.5"/></svg>
<svg class="a" style="left:682px;top:812px;" width="10" height="10" viewBox="0 0 10 10"><rect x="8" y="0" width="1.2" height="1.2" fill="#727272"/><rect x="8" y="2" width="1.2" height="1.2" fill="#727272"/><rect x="6" y="2" width="1.2" height="1.2" fill="#727272"/><rect x="8" y="4" width="1.2" height="1.2" fill="#727272"/><rect x="6" y="4" width="1.2" height="1.2" fill="#727272"/><rect x="4" y="4" width="1.2" height="1.2" fill="#727272"/><rect x="8" y="6" width="1.2" height="1.2" fill="#727272"/><rect x="6" y="6" width="1.2" height="1.2" fill="#727272"/><rect x="4" y="6" width="1.2" height="1.2" fill="#727272"/><rect x="2" y="6" width="1.2" height="1.2" fill="#727272"/><rect x="8" y="8" width="1.2" height="1.2" fill="#727272"/><rect x="6" y="8" width="1.2" height="1.2" fill="#727272"/><rect x="4" y="8" width="1.2" height="1.2" fill="#727272"/><rect x="2" y="8" width="1.2" height="1.2" fill="#727272"/><rect x="0" y="8" width="1.2" height="1.2" fill="#727272"/></svg>
<div class="a" style="left:693px;top:63px;width:3px;height:761px;background:#3c3c3c;border-left:1px solid #383838;border-right:1px solid #3a3a3a;background:#444"></div>
<div class="a" style="left:696px;top:63px;width:293px;height:761px;background:#535353;border:1px solid #3a3a3a;border-left:0"></div>
<div class="a" style="left:696px;top:64px;width:292px;height:11px;background:#434343"></div>
<div class="a" style="left:696px;top:75px;width:292px;height:1px;background:#3a3a3a"></div>
<svg class="a" style="left:719px;top:66px;" width="10" height="8" viewBox="0 0 10 8"><path d="M4.3 1.3 L1.8 3.5 L4.3 5.7 M8.1 1.3 L5.6 3.5 L8.1 5.7" stroke="#e6e6e6" stroke-width="1.4" fill="none"/></svg>
<svg class="a" style="left:974px;top:66px;" width="10" height="8" viewBox="0 0 10 8"><path d="M1.3 1.3 L3.8 3.5 L1.3 5.7 M5.1 1.3 L7.6 3.5 L5.1 5.7" stroke="#e6e6e6" stroke-width="1.4" fill="none"/></svg>
<div class="a" style="left:733px;top:76px;width:3px;height:747px;border-left:1px solid #383838;border-right:1px solid #3a3a3a;background:#444"></div>
<div class="a" style="left:696px;top:116px;width:37px;height:1px;background:#3a3a3a"></div>
<svg class="a" style="left:696px;top:76px;" width="37" height="40" viewBox="0 0 37 40"><rect x="8" y="3" width="1" height="4" fill="#3a3a3a"/><rect x="10" y="3" width="1" height="4" fill="#3a3a3a"/><rect x="12" y="3" width="1" height="4" fill="#3a3a3a"/><rect x="14" y="3" width="1" height="4" fill="#3a3a3a"/><rect x="16" y="3" width="1" height="4" fill="#3a3a3a"/><rect x="18" y="3" width="1" height="4" fill="#3a3a3a"/><rect x="20" y="3" width="1" height="4" fill="#3a3a3a"/><rect x="22" y="3" width="1" height="4" fill="#3a3a3a"/><rect x="24" y="3" width="1" height="4" fill="#3a3a3a"/><rect x="26" y="3" width="1" height="4" fill="#3a3a3a"/><rect x="12.55" y="14.55" width="3.8" height="3.6" stroke="#c8c8c8" stroke-width="1.3" fill="none"/><rect x="12.55" y="20.65" width="3.8" height="3.6" stroke="#c8c8c8" stroke-width="1.3" fill="none"/><rect x="11.9" y="26.1" width="5.1" height="4.9" fill="#c8c8c8"/><path d="M22.3 18.3 C25.6 20.2 26.6 25.6 21.3 28.6" stroke="#c8c8c8" stroke-width="1.9" fill="none"/><path d="M19.9 15.1 H26.1 L19.9 20.9 Z" fill="#c8c8c8"/></svg>
<div class="a" style="left:736px;top:76px;width:252px;height:27px;background:#454545"></div>
<div class="a" style="left:736px;top:102px;width:252px;height:1px;background:#3a3a3a"></div>
<div class="a" style="left:736px;top:76px;width:52px;height:27px;background:#535353"></div>
<div class="a" style="left:788px;top:76px;width:1px;height:27px;background:#3a3a3a"></div>
<div class="a" style="left:839px;top:76px;width:1px;height:27px;background:#3a3a3a"></div>
<div class="a" style="left:938px;top:76px;width:1px;height:27px;background:#3a3a3a"></div>
<div class="t" style="left:749px;top:83px;color:#f0f0f0;font-size:13px">属性</div>
<div class="t" style="left:801px;top:83px;color:#a8a8a8;font-size:13px">页面</div>
<div class="t" style="left:853px;top:84px;color:#9c9c9c;font-size:13px">CC Libraries</div>
<div class="t" style="left:747px;top:115px;color:#e6e6e6">未选择对象</div>
<div class="a" style="left:736px;top:136px;width:252px;height:1px;background:#474747"></div>
<div class="t" style="left:746px;top:149px;color:#ececec">文档</div>
<div class="a" style="left:746px;top:170px;width:94px;height:21px;background:#454545;border:1px solid #666;border-radius:3px"></div>
<div class="a" style="left:821px;top:170px;width:1px;height:21px;background:#666"></div>
<div class="t" style="left:751px;top:175px;color:#e8e8e8;font-size:13px">A4</div>
<svg class="a" style="left:826px;top:178px;" width="9" height="6" viewBox="0 0 9 6"><path d="M1 1 L4.5 4.5 L8 1" stroke="#c8c8c8" stroke-width="1.2" fill="none"/></svg>
<div class="t" style="left:752px;top:207px;color:#ececec">宽</div>
<div class="a" style="left:766px;top:203px;width:74px;height:21px;background:#454545;border:1px solid #666;border-radius:3px"></div>
<div class="a" style="left:784px;top:203px;width:1px;height:21px;background:#666"></div>
<svg class="a" style="left:770px;top:204px;" width="10" height="18" viewBox="0 0 10 18"><path d="M1.3 5.6 L5 2 L8.7 5.6 M1.3 12 L5 15.6 L8.7 12" stroke="#c4c4c4" stroke-width="1.1" fill="none"/></svg>
<div class="t" style="left:789px;top:208px;color:#f2f2f2;word-spacing:1.5px">210 毫米</div>
<div class="t" style="left:752px;top:233px;color:#ececec">高</div>
<div class="a" style="left:766px;top:229px;width:74px;height:21px;background:#454545;border:1px solid #666;border-radius:3px"></div>
<div class="a" style="left:784px;top:229px;width:1px;height:21px;background:#666"></div>
<svg class="a" style="left:770px;top:230px;" width="10" height="18" viewBox="0 0 10 18"><path d="M1.3 5.6 L5 2 L8.7 5.6 M1.3 12 L5 15.6 L8.7 12" stroke="#c4c4c4" stroke-width="1.1" fill="none"/></svg>
<div class="t" style="left:789px;top:234px;color:#f2f2f2;word-spacing:1.5px">297 毫米</div>
<div class="a" style="left:867px;top:170px;width:22px;height:22px;background:#333;border-radius:3px"></div>
<div class="a" style="left:917px;top:170px;width:22px;height:22px;background:#333;border-radius:3px"></div>
<svg class="a" style="left:867px;top:170px;" width="100" height="22" viewBox="0 0 100 22"><path d="M6 3.5 H17.5 V18.5 H15.5" stroke="#c8c8c8" stroke-width="1.1" fill="none"/><path d="M5 3 H15.8 V19.2 L5 17.8 Z" fill="#c8c8c8"/><path d="M7.6 15.4 L10.5 6.2 L13.4 15.4 M8.6 12.4 H12.4" stroke="#2f2f2f" stroke-width="1.1" fill="none"/><path d="M31 18.5 H29.6 V3.5 H40.5" stroke="#c8c8c8" stroke-width="1.1" fill="none"/><path d="M31.4 3 H42.2 V19.2 L31.4 17.8 Z" fill="#c8c8c8"/><path d="M36.8 5.2 V16.8 M33.4 9 H40.2 M36.8 9.5 L33.6 13.6 M36.8 9.5 L40 13.6" stroke="#4a4a4a" stroke-width="1.1" fill="none"/><rect x="54.6" y="3.6" width="12.8" height="15.2" stroke="#c8c8c8" stroke-width="1.3" fill="none"/><circle cx="61" cy="7.2" r="2" fill="#c8c8c8"/><path d="M57.3 18.8 V12.4 C57.3 10.8 58.4 10.2 61 10.2 C63.6 10.2 64.7 10.8 64.7 12.4 V18.8 Z" fill="#c8c8c8"/><rect x="79.6" y="3.6" width="12.6" height="15" stroke="#c8c8c8" stroke-width="1.3" fill="none"/><circle cx="83" cy="11" r="1.9" fill="#c8c8c8"/><path d="M92 6.6 V15.4 H88.6 C87.3 15.4 86.4 14.6 86.4 13.4 V8.6 C86.4 7.4 87.3 6.6 88.6 6.6 Z" fill="#c8c8c8"/></svg>
<svg class="a" style="left:866px;top:202px;" width="20" height="21" viewBox="0 0 20 21"><path d="M9.5 0 V19" stroke="#c8c8c8" stroke-width="1.2"/><path d="M1.5 8 L4.5 4.5 H8.7 V17 H1.5 Z M10.3 4.5 H14.5 L17.5 8 V17 H10.3 Z" fill="#c8c8c8"/><path d="M4.5 4.5 V8 H1.5 M14.5 4.5 V8 H17.5" stroke="#535353" stroke-width="0.8" fill="none"/></svg>
<div class="a" style="left:891px;top:203px;width:69px;height:21px;background:#454545;border:1px solid #666;border-radius:3px"></div>
<div class="t" style="left:897px;top:208px;color:#f2f2f2">1</div>
<div class="a" style="left:867px;top:234px;width:12px;height:12px;background:#c8c8c8;border-radius:2px"></div>
<svg class="a" style="left:867px;top:234px;" width="12" height="12" viewBox="0 0 12 12"><path d="M2.6 6.2 L5 8.6 L9.4 3.6" stroke="#444" stroke-width="1.5" fill="none"/></svg>
<div class="t" style="left:886px;top:235px;color:#ececec">对页</div>
<div class="t" style="left:746px;top:262px;color:#ececec">边距</div>
<svg class="a" style="left:746px;top:283px;" width="18" height="18" viewBox="0 0 18 18"><rect x="1" y="1" width="16" height="4.2" fill="#c8c8c8"/><rect x="1.6" y="7.6" width="14.8" height="9.2" stroke="#c8c8c8" stroke-width="1.2" fill="none"/></svg>
<svg class="a" style="left:746px;top:309px;" width="18" height="18" viewBox="0 0 18 18"><rect x="1.6" y="1.6" width="14.8" height="9" stroke="#c8c8c8" stroke-width="1.2" fill="none"/><rect x="1" y="12.6" width="16" height="4.2" fill="#c8c8c8"/></svg>
<div class="a" style="left:767px;top:283px;width:73px;height:20px;background:#454545;border:1px solid #666;border-radius:3px"></div>
<div class="a" style="left:784px;top:283px;width:1px;height:20px;background:#666"></div>
<svg class="a" style="left:770px;top:284px;" width="10" height="18" viewBox="0 0 10 18"><path d="M1.3 5.6 L5 2 L8.7 5.6 M1.3 12 L5 15.6 L8.7 12" stroke="#c4c4c4" stroke-width="1.1" fill="none"/></svg>
<div class="t" style="left:789px;top:288px;color:#f2f2f2;word-spacing:1px">20 毫米</div>
<div class="a" style="left:892px;top:283px;width:74px;height:20px;background:#454545;border:1px solid #666;border-radius:3px"></div>
<div class="a" style="left:910px;top:283px;width:1px;height:20px;background:#666"></div>
<svg class="a" style="left:896px;top:284px;" width="10" height="18" viewBox="0 0 10 18"><path d="M1.3 5.6 L5 2 L8.7 5.6 M1.3 12 L5 15.6 L8.7 12" stroke="#c4c4c4" stroke-width="1.1" fill="none"/></svg>
<div class="t" style="left:915px;top:288px;color:#f2f2f2;word-spacing:1px">20 毫米</div>
<div class="a" style="left:767px;top:309px;width:73px;height:20px;background:#454545;border:1px solid #666;border-radius:3px"></div>
<div class="a" style="left:784px;top:309px;width:1px;height:20px;background:#666"></div>
<svg class="a" style="left:770px;top:310px;" width="10" height="18" viewBox="0 0 10 18"><path d="M1.3 5.6 L5 2 L8.7 5.6 M1.3 12 L5 15.6 L8.7 12" stroke="#c4c4c4" stroke-width="1.1" fill="none"/></svg>
<div class="t" style="left:789px;top:314px;color:#f2f2f2;word-spacing:1px">20 毫米</div>
<div class="a" style="left:892px;top:309px;width:74px;height:20px;background:#454545;border:1px solid #666;border-radius:3px"></div>
<div class="a" style="left:910px;top:309px;width:1px;height:20px;background:#666"></div>
<svg class="a" style="left:896px;top:310px;" width="10" height="18" viewBox="0 0 10 18"><path d="M1.3 5.6 L5 2 L8.7 5.6 M1.3 12 L5 15.6 L8.7 12" stroke="#c4c4c4" stroke-width="1.1" fill="none"/></svg>
<div class="t" style="left:915px;top:314px;color:#f2f2f2;word-spacing:1px">20 毫米</div>
<svg class="a" style="left:872px;top:283px;" width="18" height="18" viewBox="0 0 18 18"><rect x="1.6" y="2.2" width="8.6" height="11.6" stroke="#c8c8c8" stroke-width="1.2" fill="none"/><rect x="12" y="2" width="3.6" height="12.2" fill="#c8c8c8"/><path d="M16.6 0.5 V16.5" stroke="#c8c8c8" stroke-width="1"/></svg>
<svg class="a" style="left:872px;top:309px;" width="18" height="18" viewBox="0 0 18 18"><rect x="0.8" y="2.2" width="3.6" height="12.2" fill="#c8c8c8"/><rect x="6.6" y="2.2" width="8.6" height="11.6" stroke="#c8c8c8" stroke-width="1.2" fill="none"/><path d="M16.6 0.5 V16.5" stroke="#c8c8c8" stroke-width="1"/></svg>
<div class="a" style="left:845px;top:293px;width:22px;height:22px;background:#333;border-radius:3px"></div>
<svg class="a" style="left:845px;top:293px;" width="22" height="22" viewBox="0 0 22 22"><path d="M8.9 8.6 C8.9 5.6 10 4.3 11 4.3 C12.3 4.3 13.2 5.6 13.2 8 V10.5 C13.2 12 12.5 12.8 11.4 12.8 M13.2 14.8 C13.2 17 12.2 18 11 18 C9.7 18 8.8 16.8 8.8 14.5 V12 C8.8 10.5 9.5 9.7 10.6 9.7" stroke="#c8c8c8" stroke-width="1.4" fill="none"/></svg>
<div class="t" style="left:746px;top:350px;color:#ececec">方向:</div>
<div class="a" style="left:846px;top:344px;width:120px;height:20px;background:#454545;border:1px solid #666;border-radius:3px"></div>
<div class="a" style="left:947px;top:344px;width:1px;height:20px;background:#666"></div>
<div class="t" style="left:851px;top:349px;color:#f2f2f2">水平</div>
<svg class="a" style="left:952px;top:351px;" width="9" height="6" viewBox="0 0 9 6"><path d="M1 1 L4.5 4.5 L8 1" stroke="#c8c8c8" stroke-width="1.2" fill="none"/></svg>
<div class="a" style="left:746px;top:374px;width:220px;height:20px;border:1px solid #6e6e6e;border-radius:3px"></div>
<div class="t" style="left:746px;top:379px;width:220px;text-align:center;color:#ececec">调整版面</div>
<div class="a" style="left:736px;top:400px;width:252px;height:1px;background:#474747"></div>
<div class="t" style="left:746px;top:412px;color:#ececec">页面</div>
<div class="a" style="left:746px;top:433px;width:94px;height:21px;background:#454545;border:1px solid #666;border-radius:3px"></div>
<div class="a" style="left:821px;top:433px;width:1px;height:21px;background:#666"></div>
<div class="t" style="left:750px;top:438px;color:#e8e8e8;font-size:13px">1</div>
<svg class="a" style="left:826px;top:441px;" width="9" height="6" viewBox="0 0 9 6"><path d="M1 1 L4.5 4.5 L8 1" stroke="#c8c8c8" stroke-width="1.2" fill="none"/></svg>
<svg class="a" style="left:918px;top:438px;" width="14" height="14" viewBox="0 0 14 14"><rect x="1.4" y="1.4" width="10.4" height="10.4" stroke="#c8c8c8" stroke-width="1.1" fill="none"/><path d="M6.6 3.8 V9.4 M3.8 6.6 H9.4" stroke="#c8c8c8" stroke-width="1.2"/></svg>
<svg class="a" style="left:945px;top:438px;" width="14" height="14" viewBox="0 0 14 14"><path d="M1 2.4 H11.5 M4 2.4 V1 H8.5 V2.4 M2.2 3.5 V12.6 H10.3 V3.5 M4.4 4.8 V11.4 M6.25 4.8 V11.4 M8.1 4.8 V11.4" stroke="#7a7a7a" stroke-width="0.9" fill="none"/></svg>
<div class="a" style="left:746px;top:462px;width:220px;height:20px;border:1px solid #6e6e6e;border-radius:3px"></div>
<div class="t" style="left:746px;top:467px;width:220px;text-align:center;color:#ececec">编辑页面</div>
<div class="a" style="left:736px;top:489px;width:252px;height:1px;background:#474747"></div>
<div class="t" style="left:746px;top:506px;color:#ececec">标尺和网格</div>
<div class="a" style="left:867px;top:500px;width:22px;height:22px;background:#333;border-radius:3px"></div>
<svg class="a" style="left:867px;top:500px;" width="100" height="22" viewBox="0 0 100 22"><path d="M2.8 3 H19.2 V6.6 H6.9 V18.9 H2.8 Z" fill="#c8c8c8"/><rect x="8.2" y="4.3" width="1.2" height="1.2" fill="#333"/><rect x="11.9" y="4.3" width="1.2" height="1.2" fill="#333"/><rect x="15.6" y="4.3" width="1.2" height="1.2" fill="#333"/><rect x="18.6" y="4.3" width="1.2" height="1.2" fill="#333"/><rect x="4.3" y="9.6" width="1.2" height="1.2" fill="#333"/><rect x="4.3" y="13.2" width="1.2" height="1.2" fill="#333"/><rect x="4.3" y="16.8" width="1.2" height="1.2" fill="#333"/><rect x="28.5" y="3.5" width="15.6" height="15.4" stroke="#c8c8c8" stroke-width="1.2" fill="none"/><path d="M28.5 6.8 H44.1" stroke="#c8c8c8" stroke-width="1.1"/><path d="M28.5 10 H44.1" stroke="#c8c8c8" stroke-width="1.1"/><path d="M28.5 13.1 H44.1" stroke="#c8c8c8" stroke-width="1.1"/><path d="M28.5 16.2 H44.1" stroke="#c8c8c8" stroke-width="1.1"/><path d="M31.5 6.8 V16.2 M41 6.8 V16.2" stroke="#c8c8c8" stroke-width="1.1"/><rect x="53.5" y="3.5" width="15.6" height="15.4" stroke="#c8c8c8" stroke-width="1.2" fill="none"/><path d="M58.5 3.5 V18.9 M63.9 3.5 V18.9 M53.5 8.5 H69.1 M53.5 13.7 H69.1" stroke="#c8c8c8" stroke-width="1.1"/><rect x="79.6" y="3.5" width="3.2" height="15.4" stroke="#c8c8c8" stroke-width="1.1" fill="none"/><rect x="85.5" y="3.5" width="3.2" height="15.4" stroke="#c8c8c8" stroke-width="1.1" fill="none"/><rect x="91.5" y="3.5" width="3.2" height="15.4" stroke="#c8c8c8" stroke-width="1.1" fill="none"/><path d="M79.6 6.6 h3.2" stroke="#c8c8c8" stroke-width="1"/><path d="M79.6 9.7 h3.2" stroke="#c8c8c8" stroke-width="1"/><path d="M79.6 12.8 h3.2" stroke="#c8c8c8" stroke-width="1"/><path d="M79.6 15.9 h3.2" stroke="#c8c8c8" stroke-width="1"/><path d="M85.5 6.6 h3.2" stroke="#c8c8c8" stroke-width="1"/><path d="M85.5 9.7 h3.2" stroke="#c8c8c8" stroke-width="1"/><path d="M85.5 12.8 h3.2" stroke="#c8c8c8" stroke-width="1"/><path d="M85.5 15.9 h3.2" stroke="#c8c8c8" stroke-width="1"/><path d="M91.5 6.6 h3.2" stroke="#c8c8c8" stroke-width="1"/><path d="M91.5 9.7 h3.2" stroke="#c8c8c8" stroke-width="1"/><path d="M91.5 12.8 h3.2" stroke="#c8c8c8" stroke-width="1"/><path d="M91.5 15.9 h3.2" stroke="#c8c8c8" stroke-width="1"/></svg>
<div class="a" style="left:736px;top:529px;width:252px;height:1px;background:#474747"></div>
<div class="t" style="left:746px;top:547px;color:#ececec">参考线</div>
<div class="a" style="left:867px;top:540px;width:22px;height:22px;background:#333;border-radius:3px"></div>
<div class="a" style="left:905px;top:540px;width:22px;height:22px;background:#333;border-radius:3px"></div>
<div class="a" style="left:943px;top:540px;width:22px;height:22px;background:#333;border-radius:3px"></div>
<svg class="a" style="left:867px;top:540px;" width="100" height="22" viewBox="0 0 100 22"><path d="M6.4 2.7 V18.9 M9.6 2.7 V18.9 M3 8.5 H19 M3 15.3 H19" stroke="#c8c8c8" stroke-width="1.1"/><path d="M44 2.7 V18.9 M47.2 2.7 V18.9 M41 8.5 H56.8 M41 15.3 H49.3" stroke="#c8c8c8" stroke-width="1.1"/><rect x="51" y="15.3" width="6.9" height="4.9" fill="#c8c8c8"/><path d="M52.6 15.3 V13.2 C52.6 11.6 53.6 11 54.5 11 C55.5 11 56.4 11.6 56.4 13" stroke="#c8c8c8" stroke-width="1.1" fill="none"/><path d="M82.8 2.7 V18.9 M79.1 8.5 H94.8" stroke="#c8c8c8" stroke-width="1.1"/><path d="M86.5 5.2 L83.4 8.5 L86.5 11.8" stroke="#c8c8c8" stroke-width="1.1" fill="none"/><path d="M93.5 11.6 L89.4 15.8 H92 L90.2 19.4 L95.6 14.6 H93 L95.2 11.6 Z" fill="#c8c8c8"/></svg>
<div class="a" style="left:736px;top:569px;width:252px;height:1px;background:#474747"></div>
<div class="t" style="left:746px;top:577px;color:#ececec">快速操作</div>
<div class="a" style="left:746px;top:597px;width:105px;height:21px;border:1px solid #6e6e6e;border-radius:3px"></div>
<div class="t" style="left:746px;top:602px;width:105px;text-align:center;color:#ececec">导入文件</div>
<div class="a" style="left:861px;top:597px;width:105px;height:21px;border:1px solid #6e6e6e;border-radius:3px"></div>
<div class="t" style="left:861px;top:602px;width:105px;text-align:center;color:#ececec">版面网格选项</div>
<div class="a" style="left:746px;top:628px;width:220px;height:21px;border:1px solid #6e6e6e;border-radius:3px"></div>
<div class="t" style="left:752px;top:633px;width:220px;text-align:center;color:#ececec">文字生成图像</div>
</body></html>
